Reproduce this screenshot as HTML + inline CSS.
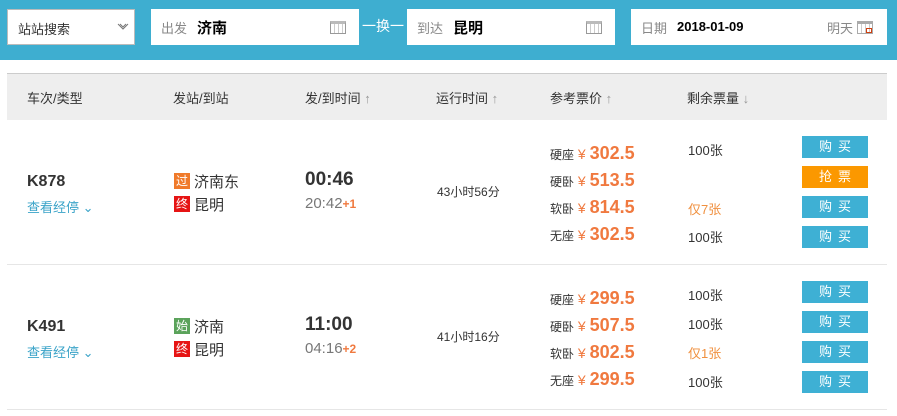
<!DOCTYPE html>
<html><head><meta charset="utf-8"><style>
*{margin:0;padding:0;box-sizing:border-box}
body{width:897px;height:416px;background:#fff;font-family:"Liberation Sans","Noto Sans CJK SC",sans-serif;color:#333;position:relative;overflow:hidden}
.a{position:absolute;white-space:nowrap}
.box{position:absolute;background:#fff;top:9px;height:36px}
.lbl{color:#888;font-size:13px}
.btn{position:absolute;left:802px;width:66px;height:22px;background:#3eb0d4;color:#fff;font-size:13px;text-align:center;line-height:22px;letter-spacing:6px;text-indent:6px}
.org{background:#fb9800}
.pl{font-size:12px;color:#333}
.pr{color:#f0793f;font-weight:bold;font-size:18px}
.yen{color:#f0793f;font-size:14px}
.tag{position:absolute;width:16px;height:16px;color:#fff;font-size:12px;line-height:16px;text-align:center}
.cal{position:absolute;width:16px;height:13px;border:1px solid #999;border-top:3px solid #bbb;background:repeating-linear-gradient(90deg,#fff 0 3px,#ccc 3px 4px)}
</style></head><body>
<div class="a" style="left:0;top:0;width:897px;height:60px;background:#3eaed0"></div>
<div class="box" style="left:7px;width:128px;border:1px solid #bbb"><span class="a" style="left:10px;top:9px;font-size:13px">站站搜索</span><svg class="a" style="left:109px;top:13px" width="12" height="8"><path d="M1 1l5 5 5-5M3 1l3 3 3-3" fill="none" stroke="#777" stroke-width="1"/></svg></div>
<div class="box" style="left:151px;width:208px"><span class="a lbl" style="left:10px;top:9px">出发</span><span class="a" style="left:46px;top:8px;font-size:15px;font-weight:bold;color:#000">济南</span><div class="cal" style="left:179px;top:12px"></div></div>
<span class="a" style="left:362px;top:16px;color:#fff;font-size:14px">一换一</span>
<div class="box" style="left:407px;width:208px"><span class="a lbl" style="left:10px;top:9px">到达</span><span class="a" style="left:46px;top:8px;font-size:15px;font-weight:bold;color:#000">昆明</span><div class="cal" style="left:179px;top:12px"></div></div>
<div class="box" style="left:631px;width:256px"><span class="a lbl" style="left:10px;top:9px">日期</span><span class="a" style="left:46px;top:10px;font-size:13px;font-weight:bold;color:#000">2018-01-09</span><span class="a lbl" style="left:196px;top:9px">明天</span><div class="cal" style="left:226px;top:12px;border-color:#aaa"></div><div class="a" style="left:235px;top:19px;width:6px;height:5px;border:1px solid #d04010"></div></div>
<div class="a" style="left:7px;top:73px;width:880px;height:47px;background:#eee;border-top:1px solid #ccc"></div>
<div class="a" style="left:27px;top:88px;font-size:13px">车次/类型</div>
<div class="a" style="left:173px;top:88px;font-size:13px">发站/到站</div>
<div class="a" style="left:305px;top:88px;font-size:13px">发/到时间 <span style="color:#999">↑</span></div>
<div class="a" style="left:436px;top:88px;font-size:13px">运行时间 <span style="color:#999">↑</span></div>
<div class="a" style="left:550px;top:88px;font-size:13px">参考票价 <span style="color:#999">↑</span></div>
<div class="a" style="left:687px;top:88px;font-size:13px">剩余票量 <span style="color:#999">↓</span></div>

<div class="a" style="left:7px;top:264px;width:880px;height:1px;background:#e6e6e6"></div>
<div class="a" style="left:7px;top:409px;width:880px;height:1px;background:#e6e6e6"></div>

<!-- row1 -->
<div class="a" style="left:27px;top:173px;font-size:16px;font-weight:bold">K878</div>
<div class="a" style="left:27px;top:197px;font-size:13px;color:#3aa3c8">查看经停 ⌄</div>
<div class="tag" style="left:174px;top:173px;background:#f07a2a">过</div><div class="a" style="left:194px;top:171px;font-size:15px">济南东</div>
<div class="tag" style="left:174px;top:196px;background:#e61414">终</div><div class="a" style="left:194px;top:194px;font-size:15px">昆明</div>
<div class="a" style="left:305px;top:169px;font-size:19px;font-weight:bold">00:46</div>
<div class="a" style="left:305px;top:195px;font-size:15px;color:#777">20:42<span style="color:#f0793f;font-size:12px;font-weight:bold">+1</span></div>
<div class="a" style="left:437px;top:183px;font-size:12px">43小时56分</div>
<div class="a" style="left:550px;top:143px"><span class="pl">硬座</span><span class="yen"> ¥ </span><span class="pr">302.5</span></div>
<div class="a" style="left:550px;top:170px"><span class="pl">硬卧</span><span class="yen"> ¥ </span><span class="pr">513.5</span></div>
<div class="a" style="left:550px;top:197px"><span class="pl">软卧</span><span class="yen"> ¥ </span><span class="pr">814.5</span></div>
<div class="a" style="left:550px;top:224px"><span class="pl">无座</span><span class="yen"> ¥ </span><span class="pr">302.5</span></div>
<div class="a" style="left:688px;top:140px;font-size:13px">100张</div>
<div class="a" style="left:688px;top:199px;font-size:13px;color:#f0903f">仅7张</div>
<div class="a" style="left:688px;top:227px;font-size:13px">100张</div>
<div class="btn" style="top:136px">购买</div>
<div class="btn org" style="top:166px">抢票</div>
<div class="btn" style="top:196px">购买</div>
<div class="btn" style="top:226px">购买</div>

<!-- row2 -->
<div class="a" style="left:27px;top:318px;font-size:16px;font-weight:bold">K491</div>
<div class="a" style="left:27px;top:342px;font-size:13px;color:#3aa3c8">查看经停 ⌄</div>
<div class="tag" style="left:174px;top:318px;background:#5ba35b">始</div><div class="a" style="left:194px;top:316px;font-size:15px">济南</div>
<div class="tag" style="left:174px;top:341px;background:#e61414">终</div><div class="a" style="left:194px;top:339px;font-size:15px">昆明</div>
<div class="a" style="left:305px;top:314px;font-size:19px;font-weight:bold">11:00</div>
<div class="a" style="left:305px;top:340px;font-size:15px;color:#777">04:16<span style="color:#f0793f;font-size:12px;font-weight:bold">+2</span></div>
<div class="a" style="left:437px;top:328px;font-size:12px">41小时16分</div>
<div class="a" style="left:550px;top:288px"><span class="pl">硬座</span><span class="yen"> ¥ </span><span class="pr">299.5</span></div>
<div class="a" style="left:550px;top:315px"><span class="pl">硬卧</span><span class="yen"> ¥ </span><span class="pr">507.5</span></div>
<div class="a" style="left:550px;top:342px"><span class="pl">软卧</span><span class="yen"> ¥ </span><span class="pr">802.5</span></div>
<div class="a" style="left:550px;top:369px"><span class="pl">无座</span><span class="yen"> ¥ </span><span class="pr">299.5</span></div>
<div class="a" style="left:688px;top:285px;font-size:13px">100张</div>
<div class="a" style="left:688px;top:314px;font-size:13px">100张</div>
<div class="a" style="left:688px;top:343px;font-size:13px;color:#f0903f">仅1张</div>
<div class="a" style="left:688px;top:372px;font-size:13px">100张</div>
<div class="btn" style="top:281px">购买</div>
<div class="btn" style="top:311px">购买</div>
<div class="btn" style="top:341px">购买</div>
<div class="btn" style="top:371px">购买</div>
</body></html>
